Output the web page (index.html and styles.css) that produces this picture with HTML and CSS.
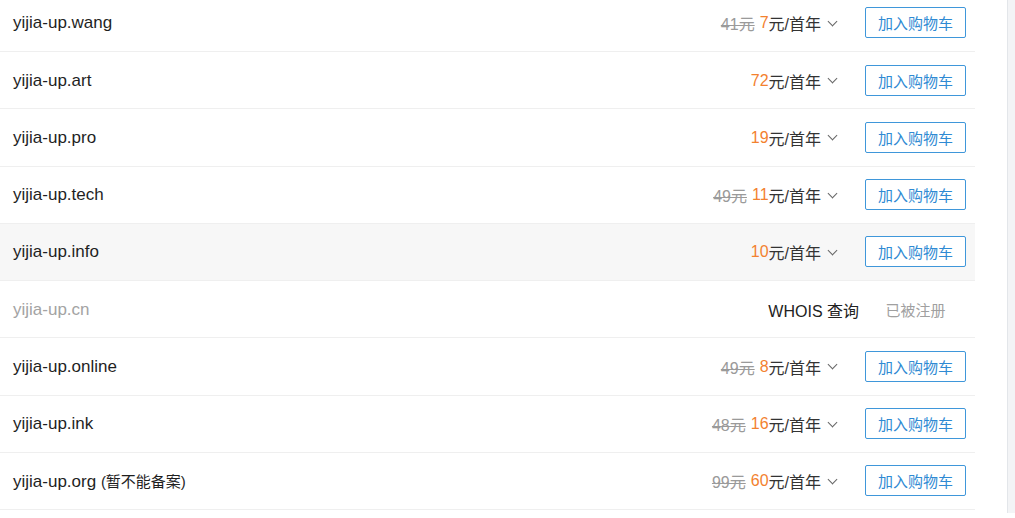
FILE: index.html
```html
<!DOCTYPE html>
<html lang="zh-CN">
<head>
    <meta charset="UTF-8">
    <title>域名查询结果</title>
    <link rel="stylesheet" href="styles.css">
</head>
<body>
    <div class="page">
        <ul class="domain-list">
            <li class="domain-row">
                <span class="domain-name">yijia-up.wang</span>
                <span class="price"><del class="old">41元</del> <em class="now">7</em>元/首年<i class="chevron"></i></span>
                <button class="add-cart">加入购物车</button>
            </li>
            <li class="domain-row">
                <span class="domain-name">yijia-up.art</span>
                <span class="price"><em class="now">72</em>元/首年<i class="chevron"></i></span>
                <button class="add-cart">加入购物车</button>
            </li>
            <li class="domain-row">
                <span class="domain-name">yijia-up.pro</span>
                <span class="price"><em class="now">19</em>元/首年<i class="chevron"></i></span>
                <button class="add-cart">加入购物车</button>
            </li>
            <li class="domain-row">
                <span class="domain-name">yijia-up.tech</span>
                <span class="price"><del class="old">49元</del> <em class="now">11</em>元/首年<i class="chevron"></i></span>
                <button class="add-cart">加入购物车</button>
            </li>
            <li class="domain-row hover">
                <span class="domain-name">yijia-up.info</span>
                <span class="price"><em class="now">10</em>元/首年<i class="chevron"></i></span>
                <button class="add-cart">加入购物车</button>
            </li>
            <li class="domain-row taken">
                <span class="domain-name">yijia-up.cn</span>
                <a class="whois">WHOIS 查询</a>
                <span class="status">已被注册</span>
            </li>
            <li class="domain-row">
                <span class="domain-name">yijia-up.online</span>
                <span class="price"><del class="old">49元</del> <em class="now">8</em>元/首年<i class="chevron"></i></span>
                <button class="add-cart">加入购物车</button>
            </li>
            <li class="domain-row">
                <span class="domain-name">yijia-up.ink</span>
                <span class="price"><del class="old">48元</del> <em class="now">16</em>元/首年<i class="chevron"></i></span>
                <button class="add-cart">加入购物车</button>
            </li>
            <li class="domain-row">
                <span class="domain-name">yijia-up.org <small>(暂不能备案)</small></span>
                <span class="price"><del class="old">99元</del> <em class="now">60</em>元/首年<i class="chevron"></i></span>
                <button class="add-cart">加入购物车</button>
            </li>
        </ul>
    </div>
</body>
</html>
```

FILE: styles.css
```css
body {
    margin: 0;
    padding: 0;
    background-color: #fff;
    font-family: 'Liberation Sans', 'Noto Sans CJK SC', sans-serif;
    overflow: hidden;
}

.page {
    width: 1007px;
    height: 518px;
    border-right: 1px solid #e3e6ea;
    box-shadow: 7px 0 0 #f3f4f6;
}

.domain-list {
    list-style: none;
    margin: -5.25px 0 0;
    padding: 0;
    width: 975px;
}

.domain-row {
    display: flex;
    align-items: center;
    height: 55.25px;
    padding: 1px 9px 0 13px;
    border-bottom: 1px solid #efefef;
}

.domain-row.hover {
    background-color: #f7f7f7;
}

.domain-name {
    flex: 1;
    font-size: 17px;
    color: #1f1f1f;
}

.domain-name small {
    font-size: 15px;
}

.taken .domain-name {
    color: #a3a3a3;
}

.price {
    display: flex;
    align-items: center;
    font-size: 16px;
    color: #333;
    margin-right: 26px;
}

.price .old {
    color: #9a9a9a;
    margin-right: 5px;
}

.price .now {
    font-style: normal;
    color: #f3812f;
}

.chevron {
    display: inline-block;
    width: 6px;
    height: 6px;
    border-right: 1px solid #666;
    border-bottom: 1px solid #666;
    transform: rotate(45deg);
    margin: -4px 3px 0 8px;
}

.add-cart {
    width: 101px;
    height: 31px;
    margin-top: -1px;
    padding: 0;
    background-color: #fff;
    border: 1px solid #3f97da;
    border-radius: 2px;
    color: #2f8ad3;
    font-family: 'Liberation Sans', 'Noto Sans CJK SC', sans-serif;
    font-size: 15px;
    cursor: pointer;
}

.whois {
    font-size: 16px;
    color: #222;
    margin-right: 6px;
}

.status {
    width: 101px;
    text-align: center;
    font-size: 15px;
    color: #a0a0a0;
}
```
